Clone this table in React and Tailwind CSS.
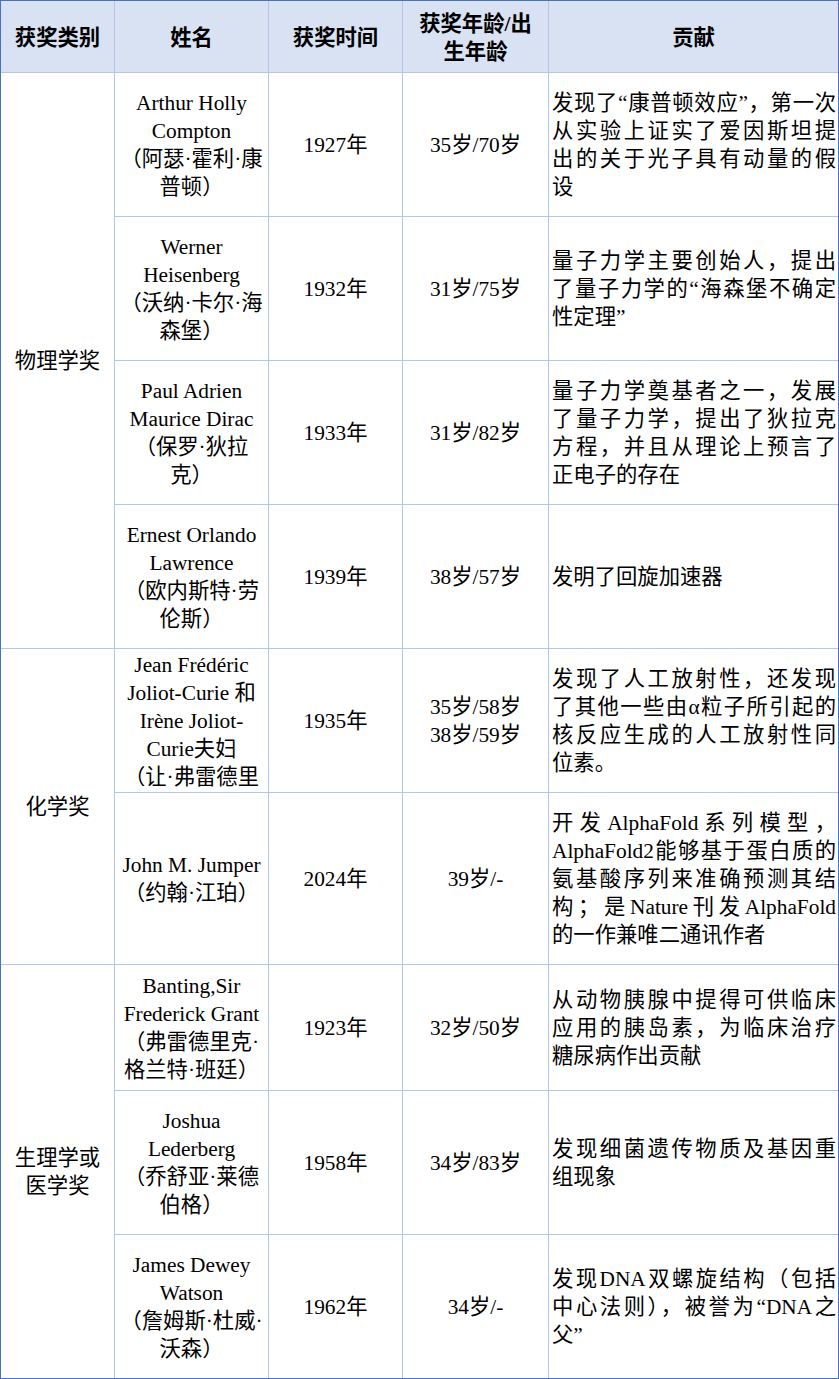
import React from "react";

const rows = [
  {
    name: ["Arthur Holly", "Compton", "（阿瑟·霍利·康", "普顿）"],
    year: "1927年",
    age: ["35岁/70岁"],
    text: ["发现了“康普顿效应”，第一次", "从实验上证实了爱因斯坦提", "出的关于光子具有动量的假", "设"],
  },
  {
    name: ["Werner", "Heisenberg", "（沃纳·卡尔·海", "森堡）"],
    year: "1932年",
    age: ["31岁/75岁"],
    text: ["量子力学主要创始人，提出", "了量子力学的“海森堡不确定", "性定理”"],
  },
  {
    name: ["Paul Adrien", "Maurice Dirac", "（保罗·狄拉", "克）"],
    year: "1933年",
    age: ["31岁/82岁"],
    text: ["量子力学奠基者之一，发展", "了量子力学，提出了狄拉克", "方程，并且从理论上预言了", "正电子的存在"],
  },
  {
    name: ["Ernest Orlando", "Lawrence", "（欧内斯特·劳", "伦斯）"],
    year: "1939年",
    age: ["38岁/57岁"],
    text: ["发明了回旋加速器"],
  },
  {
    name: ["Jean Frédéric", "Joliot-Curie 和", "Irène Joliot-", "Curie夫妇", "（让·弗雷德里"],
    year: "1935年",
    age: ["35岁/58岁", "38岁/59岁"],
    text: ["发现了人工放射性，还发现", "了其他一些由α粒子所引起的", "核反应生成的人工放射性同", "位素。"],
  },
  {
    name: ["John M. Jumper", "（约翰·江珀）"],
    year: "2024年",
    age: ["39岁/-"],
    text: ["开 发 AlphaFold 系 列 模 型 ，", "AlphaFold2能够基于蛋白质的", "氨基酸序列来准确预测其结", "构；是Nature刊发AlphaFold", "的一作兼唯二通讯作者"],
  },
  {
    name: ["Banting,Sir", "Frederick Grant", "（弗雷德里克·", "格兰特·班廷）"],
    year: "1923年",
    age: ["32岁/50岁"],
    text: ["从动物胰腺中提得可供临床", "应用的胰岛素，为临床治疗", "糖尿病作出贡献"],
  },
  {
    name: ["Joshua", "Lederberg", "（乔舒亚·莱德", "伯格）"],
    year: "1958年",
    age: ["34岁/83岁"],
    text: ["发现细菌遗传物质及基因重", "组现象"],
  },
  {
    name: ["James Dewey", "Watson", "（詹姆斯·杜威·", "沃森）"],
    year: "1962年",
    age: ["34岁/-"],
    text: ["发现DNA双螺旋结构（包括", "中心法则），被誉为“DNA之", "父”"],
  },
];

const categories = {
  0: { lines: ["物理学奖"], span: "row-span-4" },
  4: { lines: ["化学奖"], span: "row-span-2" },
  6: { lines: ["生理学或", "医学奖"], span: "row-span-3" },
};

function Lines({ lines }) {
  return lines.map((l, i) => (
    <div key={i} className="whitespace-nowrap">
      {l}
    </div>
  ));
}

function Contribution({ lines }) {
  return (
    <div className="bg-white flex flex-col justify-center pl-[3px] pr-[2px] overflow-hidden">
      {lines.map((l, i) =>
        i < lines.length - 1 ? (
          <div key={i} className="whitespace-nowrap text-justify [text-align-last:justify]">
            {l}
          </div>
        ) : (
          <div key={i} className="whitespace-nowrap text-left">
            {l}
          </div>
        )
      )}
    </div>
  );
}

export default function App() {
  return (
    <div className="w-[839px] h-[1379px] bg-white font-['Liberation_Serif','Noto_Sans_CJK_SC',serif] text-[21.33px] leading-[28px] text-black">
      <div className="border border-[#4472c4] bg-[#b4c6e7] grid gap-px grid-cols-[113px_153px_133px_145px_289px] grid-rows-[71px_143px_143px_143px_143px_143px_171px_125px_143px_143px]">
        <div className="bg-[#d9e2f3] font-bold flex items-center justify-center pt-[3px]">获奖类别</div>
        <div className="bg-[#d9e2f3] font-bold flex items-center justify-center pt-[3px]">姓名</div>
        <div className="bg-[#d9e2f3] font-bold flex items-center justify-center pt-[3px]">获奖时间</div>
        <div className="bg-[#d9e2f3] font-bold flex flex-col items-center justify-center pt-[3px]">
          <div>获奖年龄/出</div>
          <div>生年龄</div>
        </div>
        <div className="bg-[#d9e2f3] font-bold flex items-center justify-center pt-[3px]">贡献</div>

        {rows.map((r, i) => (
          <React.Fragment key={i}>
            {categories[i] && (
              <div className={`${categories[i].span} bg-white flex flex-col items-center justify-center text-center`}>
                <Lines lines={categories[i].lines} />
              </div>
            )}
            <div className="bg-white flex flex-col items-center justify-center text-center overflow-hidden">
              <Lines lines={r.name} />
            </div>
            <div className="bg-white flex items-center justify-center">{r.year}</div>
            <div className="bg-white flex flex-col items-center justify-center">
              <Lines lines={r.age} />
            </div>
            <Contribution lines={r.text} />
          </React.Fragment>
        ))}
      </div>
    </div>
  );
}
